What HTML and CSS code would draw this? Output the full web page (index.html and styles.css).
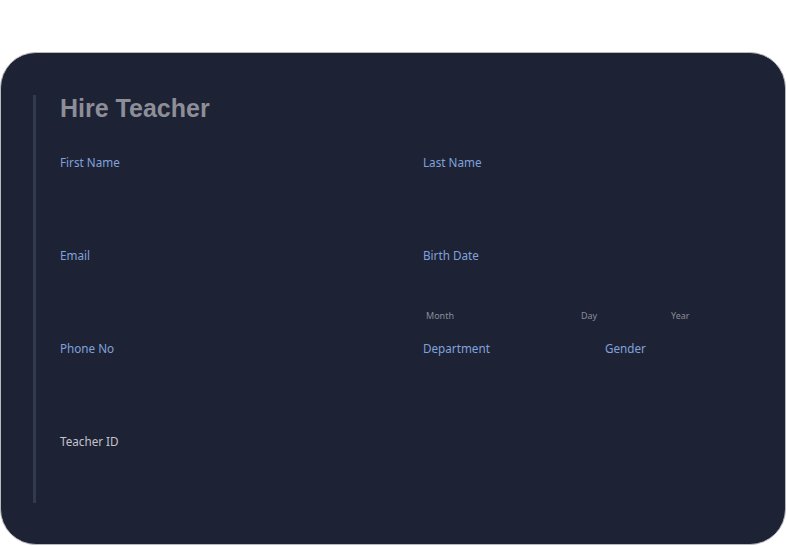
FILE: index.html
```html
<!DOCTYPE html>
<html lang="en">
<head>
<meta charset="utf-8">
<title>Hire Teacher</title>
<link rel="stylesheet" href="styles.css">
</head>
<body>
<div class="card">
  <section class="panel">
    <h1 class="title">Hire Teacher</h1>
    <div class="form">
      <div class="field"><label class="label">First Name</label></div>
      <div class="field"><label class="label">Last Name</label></div>
      <div class="field"><label class="label">Email</label></div>
      <div class="field">
        <label class="label">Birth Date</label>
        <div class="date-parts">
          <span class="sub">Month</span>
          <span class="sub">Day</span>
          <span class="sub">Year</span>
        </div>
      </div>
      <div class="field"><label class="label">Phone No</label></div>
      <div class="field split">
        <label class="label">Department</label>
        <label class="label">Gender</label>
      </div>
      <div class="field"><label class="label light">Teacher ID</label></div>
      <div class="field"></div>
    </div>
  </section>
</div>
</body>
</html>
```
FILE: styles.css
```css
html, body {
  margin: 0;
  padding: 0;
  background: #ffffff;
}
body {
  padding-top: 52px;
  font-family: "Noto Sans", "Lato", sans-serif;
}
.card {
  box-sizing: border-box;
  width: 786px;
  height: 493px;
  background: #1e2235;
  border: 1px solid #b9bac0;
  border-radius: 36px;
  padding: 42px 0 0 32px;
}
.panel {
  box-sizing: border-box;
  height: 408px;
  border-left: 3px solid #323a4f;
  padding-left: 24px;
}
.title {
  margin: 0 0 33px 0;
  padding-top: 1px;
  font-family: "Liberation Sans", Arial, sans-serif;
  font-weight: bold;
  font-size: 25px;
  line-height: 25px;
  color: #8d8e97;
}
.form {
  display: grid;
  grid-template-columns: 363px 1fr;
  grid-auto-rows: 93px;
}
.field {
  display: flex;
  flex-direction: column;
}
.label {
  font-size: 11.7px;
  line-height: 16px;
  color: #80a2dc;
}
.label.light {
  color: #c3c4cc;
}
.split {
  flex-direction: row;
}
.split .label:first-child {
  width: 182px;
}
.date-parts {
  display: grid;
  grid-template-columns: 155px 90px 1fr;
  margin-top: 46px;
  padding-left: 3px;
}
.sub {
  font-size: 9px;
  line-height: 14px;
  color: #8a8c98;
}
```
